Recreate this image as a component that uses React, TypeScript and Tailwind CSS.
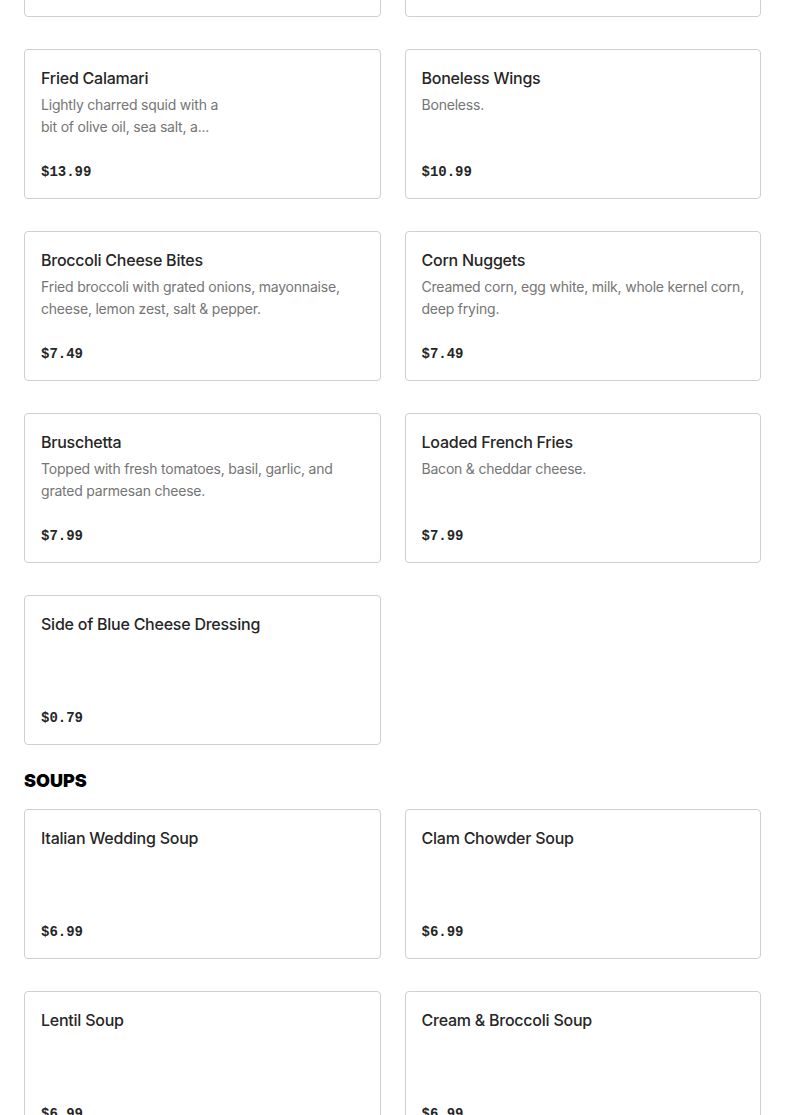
type Item = {
  name: string
  description?: string
  price: string
  narrow?: boolean
}

const appetizers: Item[] = [
  { name: 'Mozzarella Sticks', description: 'Breaded mozzarella served with marinara.', price: '$9.99' },
  { name: 'Garlic Knots', description: 'Baked dough knots with garlic butter.', price: '$7.99' },
  {
    name: 'Fried Calamari',
    description: 'Lightly charred squid with a bit of olive oil, sea salt, a...',
    price: '$13.99',
    narrow: true,
  },
  { name: 'Boneless Wings', description: 'Boneless.', price: '$10.99' },
  {
    name: 'Broccoli Cheese Bites',
    description: 'Fried broccoli with grated onions, mayonnaise, cheese, lemon zest, salt & pepper.',
    price: '$7.49',
  },
  { name: 'Corn Nuggets', description: 'Creamed corn, egg white, milk, whole kernel corn, deep frying.', price: '$7.49' },
  {
    name: 'Bruschetta',
    description: 'Topped with fresh tomatoes, basil, garlic, and grated parmesan cheese.',
    price: '$7.99',
  },
  { name: 'Loaded French Fries', description: 'Bacon & cheddar cheese.', price: '$7.99' },
  { name: 'Side of Blue Cheese Dressing', price: '$0.79' },
]

const soups: Item[] = [
  { name: 'Italian Wedding Soup', price: '$6.99' },
  { name: 'Clam Chowder Soup', price: '$6.99' },
  { name: 'Lentil Soup', price: '$6.99' },
  { name: 'Cream & Broccoli Soup', price: '$6.99' },
]

function MenuCard({ item }: { item: Item }) {
  return (
    <div className="flex h-[150px] flex-col rounded border border-[#cfcfcf] bg-white px-4 pt-4 pb-4">
      <h3 className="text-base leading-6 font-medium tracking-[-0.015em] text-[#262626]">{item.name}</h3>
      {item.description && (
        <p
          className={`mt-1 line-clamp-2 text-sm leading-[22px] tracking-[-0.015em] text-[#757575] ${item.narrow ? 'max-w-[185px]' : ''}`}
        >
          {item.description}
        </p>
      )}
      <div className="mt-auto text-sm leading-5 font-bold text-[#262626] [font-family:'Liberation_Mono',monospace]">
        {item.price}
      </div>
    </div>
  )
}

export default function App() {
  return (
    <div className="min-h-screen overflow-hidden bg-white px-6 [font-family:Inter,'Noto_Sans',sans-serif]">
      <div className="-mt-[133px] grid grid-cols-2 gap-x-6 gap-y-8">
        {appetizers.map((item) => (
          <MenuCard key={item.name} item={item} />
        ))}
      </div>
      <h2 className="mt-6 mb-4 text-lg leading-6 font-black text-black">SOUPS</h2>
      <div className="grid grid-cols-2 gap-x-6 gap-y-8 pb-10">
        {soups.map((item) => (
          <MenuCard key={item.name} item={item} />
        ))}
      </div>
    </div>
  )
}
